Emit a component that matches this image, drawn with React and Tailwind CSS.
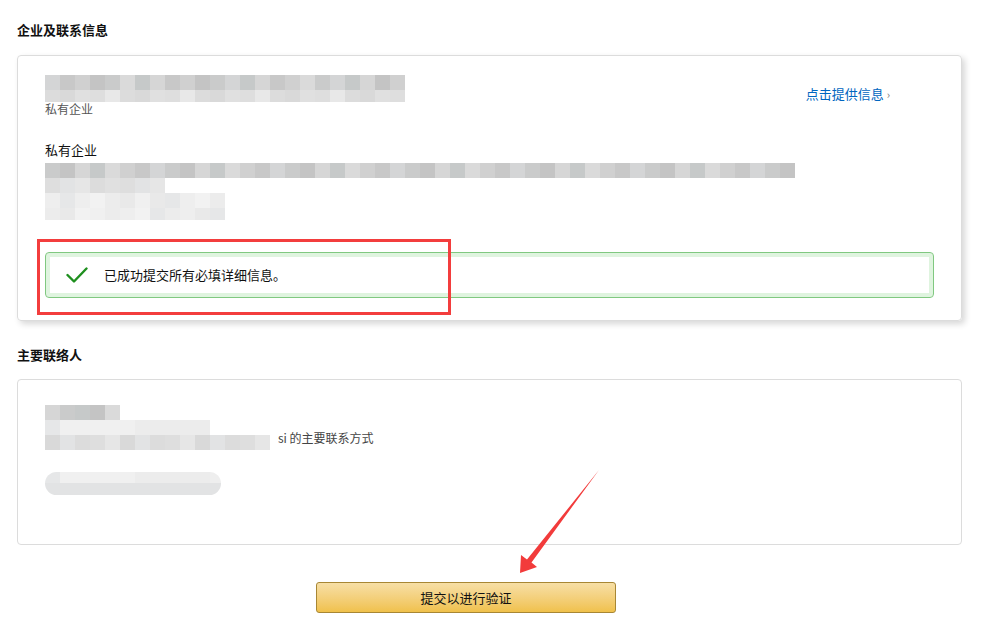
const tones = {
  dark: ['#c4c4c4', '#cacbcb', '#d4d5d6', '#c8c8c8', '#d0d0d0', '#dadada', '#c6c9c9', '#d6d6d6'],
  mid: ['#d9d9d9', '#dedede', '#e2e3e4', '#e6e6e6', '#dcdcdc', '#e0e0e0', '#e8e8e8'],
  light: ['#e9e9e9', '#eeeeee', '#ececec', '#f0f0f0', '#e6e7e8', '#f2f2f2'],
}

function pick(list, i, seed) {
  return list[(i * 7 + seed * 13 + ((i * seed) % 5)) % list.length]
}

function Mosaic({ rows, seed = 1 }) {
  return (
    <div className="flex flex-col">
      {rows.map((row, r) => (
        <div key={r} className="flex">
          {Array.from({ length: row.cells }).map((_, i) => (
            <div
              key={i}
              className="w-[15px] shrink-0"
              style={{ height: row.h || 15, background: pick(tones[row.tone], i, seed + r) }}
            />
          ))}
        </div>
      ))}
    </div>
  )
}

function CheckIcon() {
  return (
    <svg width="22" height="16" viewBox="0 0 22 16" fill="none">
      <polyline points="1.5,8 8,14.5 20.5,1.5" stroke="#1e8f1e" strokeWidth="2.4" strokeLinecap="round" strokeLinejoin="round" />
    </svg>
  )
}

export default function App() {
  return (
    <div className="relative w-[986px] h-[639px] bg-white text-[#111] font-['Noto_Sans_CJK_SC','Liberation_Sans',sans-serif] overflow-hidden">
      <div className="pl-[17px] pt-[21px] w-[962px]">
        <h2 className="text-[13px] font-bold leading-[18px]">企业及联系信息</h2>

        <div className="mt-[16px] h-[266px] border border-[#dcdcdc] rounded-[4px] shadow-[3px_3px_6px_rgba(0,0,0,0.16)] px-[27px] pt-[19px]">
          <div className="flex justify-between">
            <div>
              <Mosaic seed={2} rows={[{ cells: 24, tone: 'dark' }, { cells: 24, tone: 'mid', h: 12 }]} />
              <p className="text-[12px] leading-[16px] text-[#555] -mt-[1px]">私有企业</p>
            </div>
            <a className="mt-[10px] mr-[44px] text-[13px] leading-[18px] text-[#0066c0]">
              点击提供信息 <span className="text-[#777] text-[11px]">›</span>
            </a>
          </div>

          <p className="mt-[24px] text-[13px] leading-[17px]">私有企业</p>
          <div className="mt-[5px]">
            <Mosaic seed={5} rows={[{ cells: 50, tone: 'dark' }, { cells: 8, tone: 'mid' }, { cells: 12, tone: 'light' }, { cells: 12, tone: 'light', h: 12 }]} />
          </div>

          <div className="mt-[32px] h-[46px] flex items-center border border-[#80c880] rounded-[4px] shadow-[inset_0_0_0_4px_#dff4df]">
            <div className="ml-[20px] w-[22px] flex">
              <CheckIcon />
            </div>
            <span className="ml-[16px] text-[13px]">已成功提交所有必填详细信息。</span>
          </div>
        </div>

        <h2 className="mt-[25px] text-[13px] font-bold leading-[18px]">主要联络人</h2>

        <div className="mt-[15px] h-[166px] border border-[#dcdcdc] rounded-[4px] px-[27px] pt-[25px]">
          <Mosaic seed={3} rows={[{ cells: 5, tone: 'dark' }, { cells: 11, tone: 'light' }]} />
          <div className="flex items-start">
            <Mosaic seed={7} rows={[{ cells: 15, tone: 'mid' }]} />
            <span className="ml-[8px] -mt-[5px] text-[12px] leading-[16px] text-[#444]">si 的主要联系方式</span>
          </div>
          <div className="mt-[22px] rounded-full overflow-hidden w-[176px]">
            <Mosaic seed={4} rows={[{ cells: 12, tone: 'light', h: 11 }, { cells: 12, tone: 'mid', h: 12 }]} />
          </div>
        </div>

        <button className="mt-[37px] ml-[299px] w-[300px] h-[31px] border border-[#a88734] rounded-[3px] bg-gradient-to-b from-[#f7dfa5] to-[#f0c14b] text-[13px] text-[#111]">
          提交以进行验证
        </button>
      </div>

      <div className="absolute left-[37px] top-[239px] w-[414px] h-[76px] border-[3px] border-[#f33d3d]" />

      <svg className="absolute left-0 top-0" width="986" height="639">
        <polygon points="520,573 537,567 531.5,562.5 599,470 527,559.5 521,555" fill="#f23b3b" />
      </svg>
    </div>
  )
}
